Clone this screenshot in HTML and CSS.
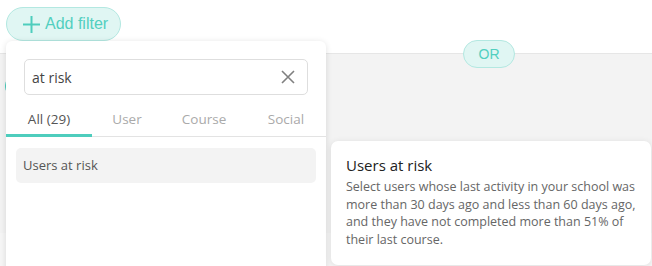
FILE: index.html
```html
<!DOCTYPE html>
<html lang="en">
<head>
    <meta charset="UTF-8">
    <title>Add filter</title>
    <link rel="stylesheet" href="styles.css">
</head>
<body>
    <div class="page">
        <div class="toolbar">
            <button class="add-filter">
                <svg width="19" height="19" viewBox="0 0 19 19"><path d="M9.5 1v17M1 9.5h17" stroke="#4ecdbd" stroke-width="2" fill="none"/></svg>
                <span>Add filter</span>
            </button>
        </div>
        <div class="group">
            <span class="or-pill">OR</span>
            <span class="peek"></span>
        </div>
        <div class="below"></div>

        <div class="popup">
            <div class="search">
                <span class="search-text">at risk</span>
                <svg class="clear" width="14" height="14" viewBox="0 0 14 14"><path d="M1 1l12 12M13 1L1 13" stroke="#808080" stroke-width="1.6" fill="none"/></svg>
            </div>
            <div class="tabs">
                <span class="tab active">All (29)</span>
                <span class="tab">User</span>
                <span class="tab">Course</span>
                <span class="tab">Social</span>
            </div>
            <div class="results">
                <div class="result">Users at risk</div>
            </div>
        </div>

        <div class="tooltip">
            <div class="tooltip-title">Users at risk</div>
            <p class="tooltip-text">Select users whose last activity in your school was more than 30 days ago and less than 60 days ago, and they have not completed more than 51% of their last course.</p>
        </div>
    </div>
</body>
</html>
```

FILE: styles.css
```css
body {
    margin: 0;
    background: #ffffff;
    font-family: "Open Sans", "Noto Sans", sans-serif;
    color: #333;
}
.page {
    position: relative;
    width: 652px;
    height: 266px;
    overflow: hidden;
}
.toolbar {
    height: 53px;
    padding: 7px 0 0 6px;
    box-sizing: border-box;
}
.add-filter {
    display: flex;
    align-items: center;
    gap: 4px;
    height: 34px;
    padding: 0 12px 0 15px;
    border: 1px solid #b3e8e1;
    border-radius: 17px;
    background: #e0f6f3;
    color: #52cfbf;
    font-family: "Liberation Sans", Arial, sans-serif;
    font-size: 16px;
    cursor: pointer;
}
.group {
    position: relative;
    height: 180px;
    background: #f3f3f3;
    border-top: 1px solid #e6e6e6;
    box-sizing: border-box;
}
.or-pill {
    position: absolute;
    left: 463px;
    top: -14px;
    width: 52px;
    height: 28px;
    box-sizing: border-box;
    border: 1px solid #b3e8e1;
    border-radius: 14px;
    background: #e0f6f3;
    color: #52cfbf;
    font-family: "Liberation Sans", Arial, sans-serif;
    font-size: 14px;
    line-height: 26px;
    text-align: center;
}
.peek {
    position: absolute;
    left: 5px;
    top: 24px;
    width: 14px;
    height: 16px;
    border-radius: 7px;
    background: #4ecdbd;
}
.below {
    height: 33px;
    background: #f6f6f6;
}
.popup {
    position: absolute;
    left: 6px;
    top: 41px;
    width: 320px;
    height: 240px;
    background: #fff;
    border-radius: 6px;
    box-shadow: 0 1px 6px rgba(0, 0, 0, 0.12);
}
.search {
    display: flex;
    align-items: center;
    justify-content: space-between;
    margin: 18px 18px 0 18px;
    height: 34px;
    padding: 0 12px 0 7px;
    border: 1px solid #dedede;
    border-radius: 5px;
    font-size: 14px;
    color: #444;
}
.tabs {
    display: grid;
    grid-template-columns: 86px 70px 84px 80px;
    margin-top: 15px;
    border-bottom: 1px solid #e3e3e3;
}
.tab {
    text-align: center;
    font-size: 13.5px;
    color: #aaa;
    padding-bottom: 6px;
    border-bottom: 3px solid transparent;
    margin-bottom: -1px;
}
.tab.active {
    color: #555;
    border-bottom-color: #4ecdbd;
}
.results {
    padding: 11px 10px 0 10px;
}
.result {
    height: 35px;
    line-height: 35px;
    padding-left: 7px;
    border-radius: 5px;
    background: #f3f3f3;
    font-size: 13px;
    color: #555;
}
.tooltip {
    position: absolute;
    left: 331px;
    top: 141px;
    width: 320px;
    height: 124px;
    box-sizing: border-box;
    padding: 14px 10px 0 15px;
    background: #fff;
    border-radius: 7px;
    box-shadow: 0 1px 6px rgba(0, 0, 0, 0.1);
}
.tooltip-title {
    font-size: 15px;
    color: #222;
    margin-bottom: 3px;
}
.tooltip-text {
    margin: 0;
    font-size: 12.5px;
    line-height: 17.5px;
    color: #666;
}
```
